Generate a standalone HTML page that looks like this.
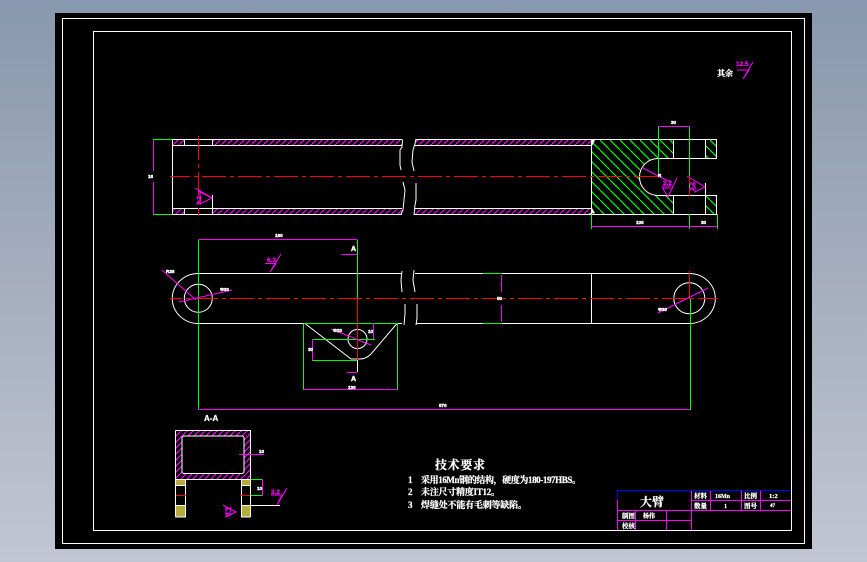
<!DOCTYPE html>
<html><head><meta charset="utf-8">
<style>
html,body{margin:0;padding:0;width:867px;height:562px;overflow:hidden;background:linear-gradient(180deg,#8898ad 0%,#a5aebf 50%,#c2c6d2 100%);}
svg{position:absolute;left:0;top:0;display:block;}
text{font-family:"Liberation Serif","Noto Serif CJK SC",serif;fill:#fff;}
.c{font-weight:700;stroke:#fff;stroke-width:.25;}
.s{font-family:"Liberation Sans",sans-serif;font-weight:700;font-size:4.6px;stroke:#fff;stroke-width:.45;}
.m{fill:#f0f;font-family:"Liberation Sans",sans-serif;stroke:#f0f;stroke-width:.2;}
</style></head>
<body>
<svg width="867" height="562" viewBox="0 0 867 562" xmlns="http://www.w3.org/2000/svg">
<defs>
<pattern id="hm" width="6" height="6" patternUnits="userSpaceOnUse"><path d="M-1 7L7 -1" stroke="#f0f" stroke-width="1.2"/></pattern>
<pattern id="hg" width="10" height="10" patternUnits="userSpaceOnUse"><path d="M-1 -1L11 11" stroke="#0f0" stroke-width="1.2"/></pattern>
</defs>
<rect x="55" y="13" width="757" height="536" fill="#000"/>
<g fill="none" stroke="#fff" stroke-width="1" shape-rendering="crispEdges">
<rect x="62.5" y="18.5" width="742" height="525"/>
<rect x="93.5" y="31.5" width="698" height="499"/>
</g>

<!-- hatches top view -->
<g stroke="none">
<rect x="173" y="140" width="11" height="5" fill="url(#hm)"/>
<rect x="213" y="140" width="189" height="5" fill="url(#hm)"/>
<rect x="416" y="140" width="175" height="5" fill="url(#hm)"/>
<rect x="173" y="209" width="11" height="5" fill="url(#hm)"/>
<rect x="213" y="209" width="189" height="5" fill="url(#hm)"/>
<rect x="415" y="209" width="176" height="5" fill="url(#hm)"/>
<path d="M592 140H673V158H658A18.5 18.5 0 0 0 658 195H673V214H592Z" fill="url(#hg)"/>
<rect x="706" y="140" width="10" height="18" fill="url(#hg)"/>
<rect x="706" y="196" width="10" height="18" fill="url(#hg)"/>
<path d="M176 430H250V479H176ZM182 436V473H244V436Z" fill="url(#hm)" fill-rule="evenodd"/>
<rect x="176" y="479" width="10" height="6" fill="#b8ab3c"/>
<rect x="176" y="505" width="10" height="12" fill="#b8ab3c"/>
<rect x="242" y="479" width="8" height="6" fill="#b8ab3c"/>
<rect x="242" y="505" width="8" height="12" fill="#b8ab3c"/>
</g>

<!-- white geometry -->
<g fill="none" stroke="#fff" stroke-width="1">
<g shape-rendering="crispEdges">
<path d="M172.5 139.5H402.5M172.5 145.5H402M172.5 208.5H402M172.5 214.5H402M172.5 139.5V214.5M184.5 139.5V145.5M212.5 139.5V145.5M184.5 208.5V214.5M212.5 208.5V214.5"/>
<path d="M416 139.5H591.5M415 145.5H591.5M415 208.5H591.5M414 214.5H591.5M591.5 139.5V214.5"/>
<path d="M591.5 139.5H716.5V158.5H658M673.5 139.5V158.5M705.5 139.5V158.5M716.5 139.5V158.5M658 195.5H716.5V214.5H591.5M673.5 195.5V214.5M705.5 195.5V214.5M716.5 195.5V214.5"/>
<path d="M198 273.5H402M415 273.5H690M198 323.5H402M416 323.5H690M591.5 273.5V323.5"/>
<path d="M175.5 430.5H250.5V517M175.5 430.5V517M175.5 479.5H250.5M175.5 517H185.5V479.5M241.5 479.5V517H250.5M175.5 485.5H185.5M175.5 505.5H185.5M241.5 485.5H250.5M241.5 505.5H250.5"/>
<path d="M250.5 505.5H280"/>
<path d="M357.5 360V372"/>
<path d="M212.5 195V208.5"/>
<path d="M705.5 183V195"/>
</g>
<path d="M658 158.5A18.5 18.5 0 0 0 658 195.5"/>
<rect x="182" y="436" width="62" height="37.5" rx="2"/>
<path d="M402.5 140L402 147L400 150L400 165L401 170M403 182L405 190L404 200L403 210L401 214"/>
<path d="M416 139L415 144L413 150L412 162L414 171M416 183L416 200L415 205L414 215"/>
<path d="M402 271L401 280L402 292M405 304L405 314L404 325"/>
<path d="M414 270L413 280L415 292M417 304L417 318L416 325"/>
<path d="M198.3 273.5A26 25 0 0 0 198.3 323.5"/>
<circle cx="198.3" cy="298.3" r="14"/>
<path d="M689.3 273.5A26 25 0 0 1 689.3 323.5"/>
<circle cx="689.3" cy="298.3" r="15.5"/>
<path d="M305 323.5L351 359H360Q366 359 371 354L397 323.5"/>
<circle cx="357.5" cy="339" r="9.5"/>
</g>

<!-- green -->
<g fill="none" stroke="#0f0" stroke-width="1" shape-rendering="crispEdges">
<path d="M153 139.5H172M153 214.5H172"/>
<path d="M658.5 126V175M689.5 126V196M689.5 214V229M591.5 214V229M717.5 214V229"/>
<path d="M198.5 240V410M357.5 240V298M690.5 299V410"/>
<path d="M303.5 323.5H397.5V390M303.5 323.5V390M357.5 323.5H374M312 339.5H375M312 360.5H357"/>
<path d="M250.5 479.5H263M250.5 495.5H263"/>
<path d="M483 273.5H502M483 323.5H502"/>
</g>

<!-- red centre lines -->
<g fill="none" stroke="#f00" stroke-width="1" shape-rendering="crispEdges">
<path d="M170 176.5H660" stroke-dasharray="24 4 4 4" stroke-dashoffset="4"/>
<path d="M198.5 136V216" stroke-dasharray="24 4 4 4"/>
<path d="M689.5 176V200" stroke-dasharray="8 4"/>
<path d="M170 298.5H718" stroke-dasharray="24 4 4 4" stroke-dashoffset="12"/>
<path d="M357.5 298V360M689.5 271V299"/>
<path d="M176 495.5H186M240 495.5H250"/>
</g>

<!-- magenta dims and symbols -->
<g fill="none" stroke="#f0f" stroke-width="1">
<g shape-rendering="crispEdges">
<path d="M153.5 140V171M153.5 182V214"/>
<path d="M658 126.5H690"/>
<path d="M591.5 226.5H717"/>
<path d="M198.5 239.5H357.5"/>
<path d="M341 254.5H357"/>
<path d="M303.5 389.5H397.5M312.5 339V360M373.5 323V339M347 372.5H357"/>
<path d="M198 409.5H690"/>
<path d="M501.5 275V292M501.5 305V322"/>
<path d="M262.5 479V496M239 454.5H264"/>
<path d="M617.5 490V530M691.5 490V530M710.5 490V510M741.5 490V510M760.5 490V510M617.5 510.5H791M691.5 500.5H791M617.5 520.5H691M635.5 510V530M666.5 510V530"/>
</g>
<path d="M737 70H749L743 79L753 62"/>
<path d="M265 263.5H276L270 272L281 254"/>
<path d="M162 270L196 300M179 302L232 290M331 329L371 345M658 313L708 288"/>
<path d="M643 168L670 182"/>
<path d="M662 186H671M662 188H671"/>
<path d="M662 187L668 197L677 178"/>
<path d="M195 188L212 198L200 204V192M212 198L198 191"/>
<path d="M687 176L705 187L695 192V182"/>
<path d="M223 505L236 512L226 517V507"/>
<path d="M271 495H282L277 505L287 488"/>
</g>
<path d="M617 490.5H791M617.5 490V500" stroke="#00f" stroke-width="1" shape-rendering="crispEdges" fill="none"/>
<path d="M592 139L588 140H595L592 146Z M592 214L588 213H595L592 208Z" fill="#fff"/>

<!-- magenta small text -->
<g font-weight="700" font-size="6.5">
<text class="m" x="736" y="66">12.5</text>
<text class="m" x="267" y="262">6.3</text>
<text class="m" x="663" y="185">3.2</text>
<text class="m" x="271" y="494">3.2</text>
<text class="m" transform="translate(201,205) rotate(-90)">3.2</text>
<text class="m" transform="translate(694,191) rotate(-90)">3.2</text>
<text class="m" transform="translate(231,516) rotate(-90)">3.2</text>
</g>

<!-- white dim text -->
<text class="s" x="148" y="178">18</text>
<text class="s" x="671" y="124">30</text>
<text class="s" x="636" y="224">100</text>
<text class="s" x="701" y="224">30</text>
<text class="s" x="658" y="177">R</text>
<text class="s" x="275" y="237">160</text>
<text class="s" x="351" y="251" style="font-size:7px">A</text>
<text class="s" x="166" y="273">R26</text>
<text class="s" x="220" y="291">Φ30</text>
<text class="s" x="333" y="332">Φ20</text>
<text class="s" x="368" y="333">10</text>
<text class="s" x="308" y="351">30</text>
<text class="s" x="351" y="381" style="font-size:7px">A</text>
<text class="s" x="348" y="389">130</text>
<text class="s" x="439" y="407">570</text>
<text class="s" x="497" y="300">50</text>
<text class="s" x="658" y="311">Φ30</text>
<text class="s" x="259" y="453">10</text>
<text class="s" x="257" y="490">10</text>
<text x="204" y="421" class="c" style="font-family:'Liberation Sans',sans-serif;font-size:8px">A-A</text>
<text x="717" y="76" class="c" font-size="8">其余</text>

<!-- technical requirements -->
<text class="c" x="435" y="469" font-size="12" textLength="50">技术要求</text>
<text class="c" x="408" y="483" font-size="9">1</text>
<text class="c" x="421" y="483" font-size="9" textLength="160">采用16Mn钢的结构，硬度为180-197HBS。</text>
<text class="c" x="408" y="495" font-size="9">2</text>
<text class="c" x="421" y="495" font-size="9" textLength="79">未注尺寸精度IT12。</text>
<text class="c" x="408" y="508" font-size="9">3</text>
<text class="c" x="421" y="508" font-size="9" textLength="106">焊缝处不能有毛刺等缺陷。</text>

<!-- title block -->
<text class="c" x="640" y="506" font-size="12">大臂</text>
<text class="c" x="694" y="498" font-size="6.5">材料</text>
<text class="c" x="715" y="498" font-size="6">16Mn</text>
<text class="c" x="744" y="498" font-size="6.5">比例</text>
<text class="c" x="769" y="498" font-size="6.5">1:2</text>
<text class="c" x="694" y="508" font-size="6.5">数量</text>
<text class="c" x="724" y="508" font-size="6">1</text>
<text class="c" x="744" y="508" font-size="6.5">图号</text>
<text class="c" x="770" y="507" font-size="5">47</text>
<text class="c" x="622" y="518" font-size="6.5">制图</text>
<text class="c" x="643" y="518" font-size="6">杨伟</text>
<text class="c" x="622" y="528" font-size="6.5">校核</text>
</svg>
</body></html>
